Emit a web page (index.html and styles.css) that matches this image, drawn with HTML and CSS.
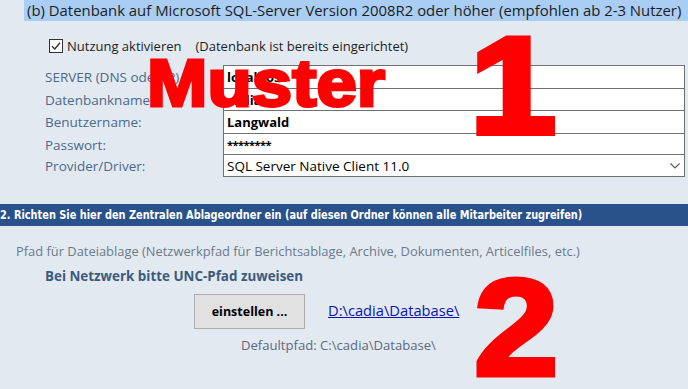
FILE: index.html
```html
<!DOCTYPE html>
<html lang="de">
<head>
  <meta charset="UTF-8">
  <title>Datenbank Einstellungen</title>
  <link rel="stylesheet" href="styles.css">
</head>
<body>
  <div class="page">
    <div class="db-title">(b) Datenbank auf Microsoft SQL-Server Version 2008R2 oder höher (empfohlen ab 2-3 Nutzer)</div>

    <div class="check-row">
      <svg class="checkbox" width="14" height="14" viewBox="0 0 14 14">
        <rect x="0.5" y="0.5" width="13" height="13" fill="#fbfcfd" stroke="#333"/>
        <path d="M3 7.2 L5.8 10 L11 3.8" fill="none" stroke="#333" stroke-width="1.4"/>
      </svg>
      <span class="check-label">Nutzung aktivieren</span>
      <span class="check-note">(Datenbank ist bereits eingerichtet)</span>
    </div>

    <div class="db-form">
      <div class="label">SERVER (DNS oder IP)</div>
      <div class="field h1">localhost</div>
      <div class="label">Datenbankname:</div>
      <div class="field h2">cadia</div>
      <div class="label">Benutzername:</div>
      <div class="field h1">Langwald</div>
      <div class="label">Passwort:</div>
      <div class="field h3 pw">********</div>
      <div class="label">Provider/Driver:</div>
      <div class="field h1 select last">
        <span>SQL Server Native Client 11.0</span>
        <svg width="10" height="6" viewBox="0 0 10 6"><path d="M0.5 0.5 L5 5 L9.5 0.5" fill="none" stroke="#555" stroke-width="1.1"/></svg>
      </div>
    </div>

    <div class="section-bar"><span>2. Richten Sie hier den Zentralen Ablageordner ein (auf diesen Ordner können alle Mitarbeiter zugreifen)</span></div>

    <p class="path-info">Pfad für Dateiablage (Netzwerkpfad für Berichtsablage, Archive, Dokumenten, Articelfiles, etc.)</p>
    <p class="unc-hint">Bei Netzwerk bitte UNC-Pfad zuweisen</p>

    <div class="path-row">
      <button class="set-btn">einstellen ...</button>
      <a class="path-link" href="#">D:\cadia\Database\</a>
    </div>
    <p class="default-path">Defaultpfad: C:\cadia\Database\</p>

    <!-- Stempel über dem Formular -->
    <div class="stamp stamp-muster">Muster</div>
    <div class="stamp stamp-one">1</div>
    <div class="stamp stamp-two">2</div>
  </div>
</body>
</html>
```

FILE: styles.css
```css
body {
  margin: 0;
  padding: 0;
  background-color: #e3e9f1;
  font-family: "Open Sans", "Noto Sans", sans-serif;
  overflow: hidden;
}

.page {
  position: relative;
  width: 688px;
  height: 389px;
  overflow: hidden;
}

.db-title {
  margin-left: 24px;
  height: 21px;
  line-height: 20px;
  padding-left: 3px;
  background-color: #aacdf4;
  color: #1d1d1d;
  font-size: 14.9px;
  white-space: nowrap;
  overflow: hidden;
}

.check-row {
  display: flex;
  align-items: center;
  height: 20px;
  margin-top: 15px;
  padding-left: 49px;
  font-size: 13px;
  color: #1d1d1d;
}

.checkbox {
  margin-right: 4px;
}

.check-note {
  margin-left: 14px;
}

.db-form {
  display: grid;
  grid-template-columns: 178px 462px;
  margin-top: 9px;
  margin-left: 45px;
}

.label {
  color: #4a6a8c;
  font-size: 13.5px;
  padding-top: 3px;
  white-space: nowrap;
}

.field {
  box-sizing: border-box;
  border: 1px solid #707070;
  border-bottom: none;
  background-color: #ffffff;
  padding-left: 3px;
  font-size: 13px;
  font-weight: bold;
  color: #000;
  display: flex;
  align-items: center;
}

.field.h1 { height: 23px; }
.field.h2 { height: 22px; }
.field.h3 { height: 21px; }

.field.pw {
  font-size: 11px;
  letter-spacing: -0.5px;
}

.field.last {
  border-bottom: 1px solid #707070;
}

.field.select {
  font-weight: normal;
  font-size: 13.5px;
  justify-content: space-between;
  padding-right: 4px;
}

.section-bar {
  margin-top: 27px;
  height: 22px;
  line-height: 22px;
  background-color: #2a528a;
  color: #ffffff;
  font-family: "Liberation Sans Narrow", "DejaVu Sans Condensed", sans-serif;
  font-weight: bold;
  font-size: 12.5px;
  white-space: nowrap;
}

.section-bar span {
  display: inline-block;
  transform: scaleX(0.87);
  transform-origin: left center;
}

.path-info {
  margin: 16px 0 0 16px;
  font-size: 12.9px;
  color: #6b7a8b;
  white-space: nowrap;
}

.unc-hint {
  margin: 7px 0 0 45px;
  font-size: 13.4px;
  font-weight: bold;
  color: #3c5b7c;
}

.path-row {
  display: flex;
  align-items: center;
  gap: 23px;
  margin: 9px 0 0 194px;
}

.set-btn {
  width: 111px;
  height: 35px;
  background-color: #e1e1e1;
  border: 1px solid #adadad;
  font-family: "Open Sans", sans-serif;
  font-weight: bold;
  font-size: 12.5px;
  color: #000;
  padding: 0;
}

.path-link {
  color: #0a14b4;
  font-size: 14.7px;
  text-decoration: underline;
  margin-top: -4px;
}

.default-path {
  margin: 7px 0 0 241px;
  font-size: 13.1px;
  color: #5b6b7d;
}

.stamp {
  position: absolute;
  color: #ff0000;
  font-family: "Liberation Sans", Arial, sans-serif;
  font-weight: bold;
  line-height: 1;
}

.stamp-muster {
  left: 147px;
  top: 50px;
  font-size: 66px;
  -webkit-text-stroke: 3px #ff0000;
  transform: scaleX(1.1);
  transform-origin: left top;
}

.stamp-one {
  left: 470px;
  top: 16px;
  font-size: 138px;
  -webkit-text-stroke: 6px #ff0000;
  transform: scaleX(1.12);
  transform-origin: left top;
}

.stamp-two {
  left: 474px;
  top: 258px;
  font-size: 138px;
  -webkit-text-stroke: 5px #ff0000;
  transform: scaleX(1.1);
  transform-origin: left top;
}
```
